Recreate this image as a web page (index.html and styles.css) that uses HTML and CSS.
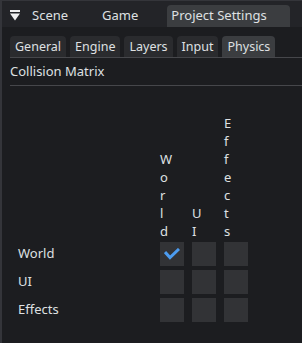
FILE: index.html
```html
<!DOCTYPE html>
<html lang="en">
<head>
    <meta charset="UTF-8">
    <meta name="viewport" content="width=device-width, initial-scale=1.0">
    <title>Project Settings</title>
    <link rel="stylesheet" href="styles.css">
</head>
<body>
    <div class="panel">
        <div class="topbar">
            <svg class="menu-icon" width="10" height="11" viewBox="0 0 10 11">
                <rect x="0" y="0" width="10" height="2" fill="#f0f0f0"/>
                <polygon points="0,3.5 10,3.5 5,10.5" fill="#f0f0f0"/>
            </svg>
            <div class="tab">Scene</div>
            <div class="tab">Game</div>
            <div class="tab active">Project Settings</div>
        </div>

        <div class="content">
            <div class="subtabs">
                <div class="subtab">General</div>
                <div class="subtab">Engine</div>
                <div class="subtab">Layers</div>
                <div class="subtab">Input</div>
                <div class="subtab active">Physics</div>
            </div>

            <div class="section-title">Collision Matrix</div>

            <div class="matrix">
                <div></div>
                <div class="col-head">World</div>
                <div class="col-head">UI</div>
                <div class="col-head">Effects</div>

                <div class="row-label">World</div>
                <div class="check checked">
                    <svg width="16" height="12" viewBox="0 0 16 12">
                        <polyline points="1,4 6,9.5 15,1" fill="none" stroke="#4c9cf0" stroke-width="3"/>
                    </svg>
                </div>
                <div class="check"></div>
                <div class="check"></div>

                <div class="row-label">UI</div>
                <div class="check"></div>
                <div class="check"></div>
                <div class="check"></div>

                <div class="row-label">Effects</div>
                <div class="check"></div>
                <div class="check"></div>
                <div class="check"></div>
            </div>
        </div>
    </div>
</body>
</html>
```

FILE: styles.css
```css
html, body {
    margin: 0;
    height: 100%;
    background-color: #1c1d20;
}
body {
    font-family: "Noto Sans", "Open Sans", sans-serif;
    font-size: 13px;
    color: #dfe0e2;
}
.panel {
    height: 100%;
    box-sizing: border-box;
    border-left: 2px solid #34353a;
    border-top: 1px solid #34353a;
}
.topbar {
    height: 26px;
    display: flex;
    align-items: flex-end;
    padding-left: 8px;
    background-color: #232428;
}
.menu-icon {
    margin: 0 12px 6px 0;
}
.tab {
    height: 22px;
    line-height: 21px;
    margin-right: 34px;
}
.tab:nth-child(3) {
    margin-right: 29px;
}
.tab.active {
    padding: 0 23px 0 4px;
    background-color: #3b3d40;
    border-radius: 4px 4px 0 0;
    margin-right: 0;
}
.subtabs {
    display: flex;
    gap: 4px;
    margin: 9px 0 0 8px;
    border-bottom: 1px solid #46474b;
    font-size: 12.5px;
}
.subtab {
    height: 21px;
    line-height: 21px;
    padding: 0 5px;
    background-color: #2a2b2e;
    border-radius: 4px 4px 0 0;
}
.subtab.active {
    background-color: #3b3d40;
}
.section-title {
    margin-left: 8px;
    height: 27px;
    line-height: 26px;
    border-bottom: 1px solid #46474b;
}
.matrix {
    display: grid;
    grid-template-columns: 134px 24px 24px 24px;
    column-gap: 8px;
    row-gap: 4px;
    align-items: center;
    padding: 28px 0 0 16px;
}
.col-head {
    align-self: end;
    width: 1px;
    word-break: break-all;
    line-height: 18px;
    margin-bottom: -2px;
}
.row-label {
    line-height: 24px;
    margin-top: -3px;
}
.check {
    width: 24px;
    height: 24px;
    background-color: #323336;
    display: flex;
    align-items: center;
    justify-content: center;
}
```
